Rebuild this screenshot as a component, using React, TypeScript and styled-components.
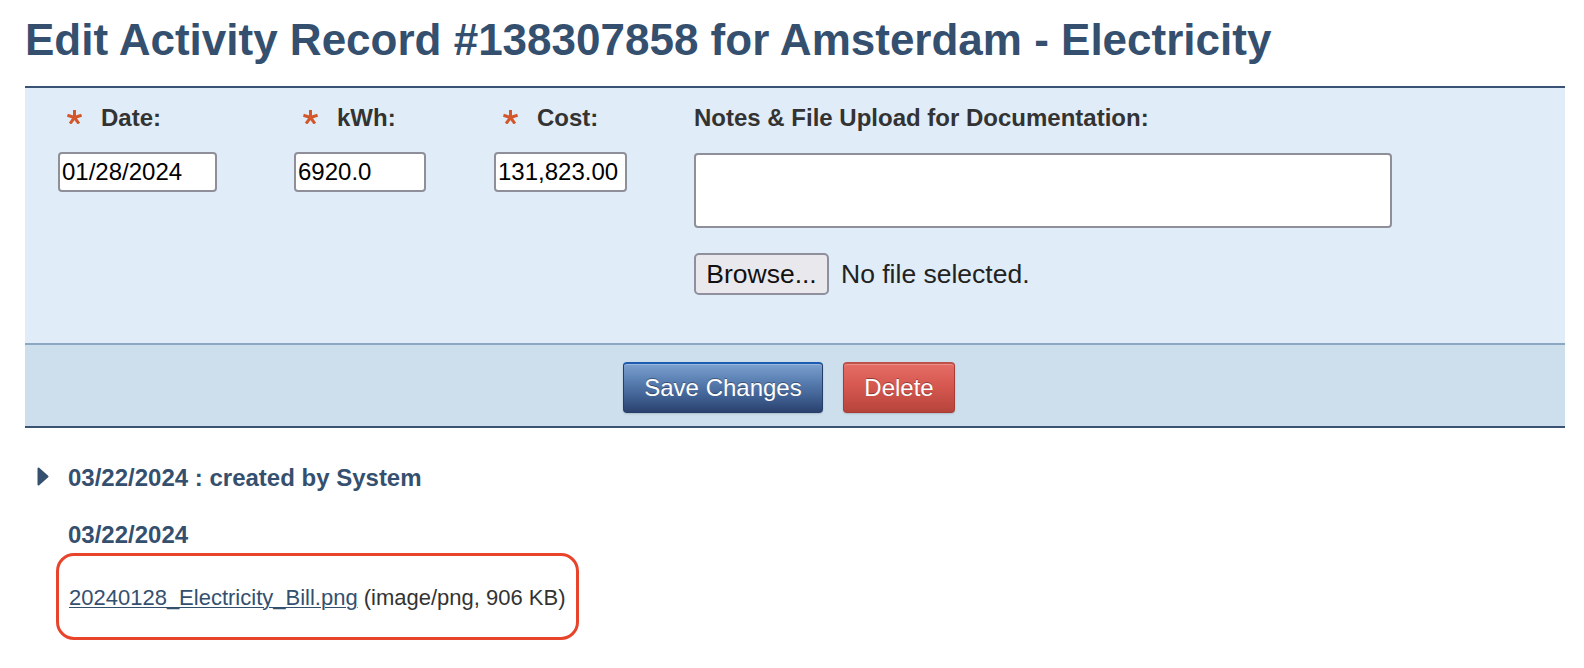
import React from "react";
import styled, { createGlobalStyle } from "styled-components";

const GlobalStyle = createGlobalStyle`
  html, body {
    margin: 0;
    padding: 0;
    background: #ffffff;
    font-family: "Liberation Sans", Arial, Helvetica, sans-serif;
  }
`;

const Page = styled.div`
  margin: 0 19px 0 25px;
  font-family: "Liberation Sans", Arial, Helvetica, sans-serif;
`;

const Title = styled.h1`
  margin: 15px 0 21px;
  font-size: 44px;
  line-height: 50px;
  font-weight: 700;
  color: #35506f;
  white-space: nowrap;
`;

const FormPanel = styled.div`
  border-top: 2px solid #3a5273;
  border-bottom: 2px solid #8ba7c3;
  background: #e0ecf8;
  padding: 16px 0 48px 33px;
  display: grid;
  grid-template-columns: 236px 200px 200px 1fr;
  align-items: start;
`;

const Field = styled.div`
  display: flex;
  flex-direction: column;
  align-items: flex-start;
  gap: 20px;
`;

const LabelRow = styled.div<{ $indent?: boolean }>`
  display: flex;
  align-items: center;
  gap: 19px;
  height: 28px;
  padding-left: ${(p) => (p.$indent ? "9px" : "0")};
  font-size: 24px;
  font-weight: 700;
  color: #333333;
  white-space: nowrap;
`;

const Star = styled.svg`
  width: 15px;
  height: 14px;
  margin-top: -3px;
  flex: none;
`;

const TextInput = styled.input<{ $w: number }>`
  box-sizing: border-box;
  width: ${(p) => p.$w}px;
  height: 40px;
  border: 2px solid #8e8f99;
  border-radius: 4px;
  background: #ffffff;
  padding: 0 2px;
  font-family: "Liberation Sans", Arial, Helvetica, sans-serif;
  font-size: 24px;
  color: #000000;
  outline: none;
`;

const NotesArea = styled.textarea`
  box-sizing: border-box;
  width: 698px;
  height: 75px;
  border: 2px solid #8e8f99;
  border-radius: 4px;
  background: #ffffff;
  resize: none;
  margin-top: 1px;
  font-family: "Liberation Sans", Arial, sans-serif;
  font-size: 20px;
  outline: none;
`;

const FileRow = styled.div`
  display: flex;
  align-items: center;
  gap: 12px;
  margin-top: 5px;
  font-size: 26.5px;
  color: #222222;
`;

const BrowseButton = styled.button`
  box-sizing: border-box;
  width: 135px;
  height: 42px;
  border: 2px solid #8f8f9d;
  border-radius: 5px;
  background: #e9e9ed;
  font-family: "Liberation Sans", Arial, sans-serif;
  font-size: 26.5px;
  color: #111111;
  padding: 0;
`;

const ButtonBar = styled.div`
  background: #cddfed;
  border-bottom: 2px solid #3a5273;
  padding: 17px 12px 13px 0;
  display: flex;
  justify-content: center;
  gap: 20px;
`;

const ActionButton = styled.button<{ $variant: "save" | "delete"; $w: number }>`
  box-sizing: border-box;
  width: ${(p) => p.$w}px;
  height: 51px;
  border-radius: 4px;
  border: 1px solid ${(p) => (p.$variant === "save" ? "#263f69" : "#a63d35")};
  border-top: 2px solid ${(p) => (p.$variant === "save" ? "#1e5cb3" : "#c0504a")};
  background: ${(p) =>
    p.$variant === "save"
      ? "linear-gradient(to bottom, #7ca1cf 0%, #5a7fb2 35%, #3f5f91 70%, #2b426f 100%)"
      : "linear-gradient(to bottom, #e46d66 0%, #d65850 45%, #b6443b 100%)"};
  box-shadow: inset 0 1px 0 rgba(255, 255, 255, 0.25), 0 1px 2px rgba(0, 0, 0, 0.15);
  color: #ffffff;
  font-family: "Liberation Sans", Arial, sans-serif;
  font-size: 24px;
  text-shadow: 0 -1px 0 rgba(0, 0, 0, 0.35);
  padding: 0;
`;

const History = styled.div`
  padding-top: 36px;
`;

const HistoryHead = styled.div`
  display: flex;
  align-items: center;
  gap: 19px;
  padding-left: 12px;
  height: 28px;
  font-size: 24px;
  line-height: 28px;
  font-weight: 700;
  color: #35506f;
`;

const Caret = styled.svg`
  width: 12px;
  height: 19px;
  margin-top: -4px;
  flex: none;
`;

const EntryDate = styled.div`
  margin: 29px 0 4px 43px;
  font-size: 24px;
  line-height: 28px;
  font-weight: 700;
  color: #35506f;
`;

const Attachment = styled.div`
  display: inline-block;
  margin-left: 31px;
  border: 3px solid #e8442b;
  border-radius: 18px;
  padding: 29px 10px 27px 10px;
  font-size: 22px;
  line-height: 25px;
  color: #333333;
  white-space: nowrap;
`;

const FileLink = styled.a`
  color: #34506f;
  text-decoration: underline;
  text-decoration-thickness: 1px;
  text-underline-offset: 2px;
`;

const RequiredStar = () => (
  <Star viewBox="0 0 15 14">
    <g stroke="#d4572b" strokeWidth="3" strokeLinecap="butt">
      <line x1="7.5" y1="7.5" x2="7.5" y2="0" />
      <line x1="7.5" y1="7.5" x2="14.6" y2="5.2" />
      <line x1="7.5" y1="7.5" x2="11.9" y2="13.6" />
      <line x1="7.5" y1="7.5" x2="3.1" y2="13.6" />
      <line x1="7.5" y1="7.5" x2="0.4" y2="5.2" />
    </g>
  </Star>
);

export default function App() {
  return (
    <>
      <GlobalStyle />
      <Page>
        <Title>Edit Activity Record #138307858 for Amsterdam - Electricity</Title>
        <FormPanel>
          <Field>
            <LabelRow $indent>
              <RequiredStar />
              Date:
            </LabelRow>
            <TextInput $w={159} defaultValue="01/28/2024" />
          </Field>
          <Field>
            <LabelRow $indent>
              <RequiredStar />
              kWh:
            </LabelRow>
            <TextInput $w={132} defaultValue="6920.0" />
          </Field>
          <Field>
            <LabelRow $indent>
              <RequiredStar />
              Cost:
            </LabelRow>
            <TextInput $w={133} defaultValue="131,823.00" />
          </Field>
          <Field>
            <LabelRow>Notes &amp; File Upload for Documentation:</LabelRow>
            <NotesArea />
            <FileRow>
              <BrowseButton>Browse...</BrowseButton>
              No file selected.
            </FileRow>
          </Field>
        </FormPanel>
        <ButtonBar>
          <ActionButton $variant="save" $w={200}>Save Changes</ActionButton>
          <ActionButton $variant="delete" $w={112}>Delete</ActionButton>
        </ButtonBar>
        <History>
          <HistoryHead>
            <Caret viewBox="0 0 12 19">
              <path d="M1.5 1.5 L10.5 9.5 L1.5 17.5 Z" fill="#35506f" stroke="#35506f" strokeWidth="2" strokeLinejoin="round" />
            </Caret>
            03/22/2024 : created by System
          </HistoryHead>
          <EntryDate>03/22/2024</EntryDate>
          <Attachment>
            <FileLink href="#">20240128_Electricity_Bill.png</FileLink> (image/png, 906 KB)
          </Attachment>
        </History>
      </Page>
    </>
  );
}
